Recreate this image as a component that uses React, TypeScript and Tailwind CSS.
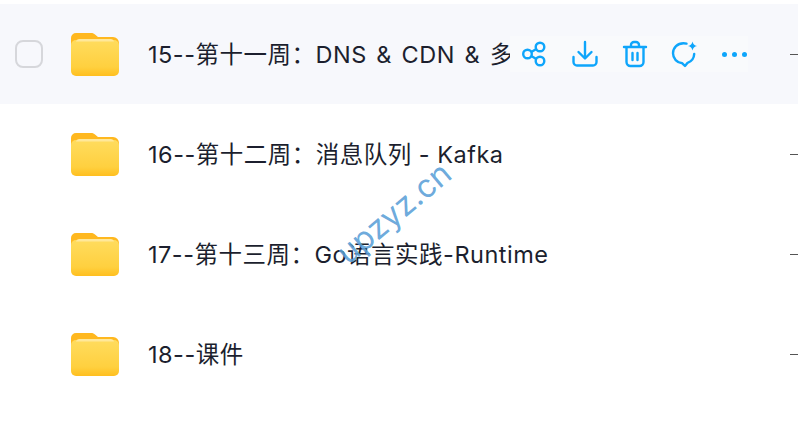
const rows = [
  { name: "15--第十一周：DNS & CDN & 多活", active: true },
  { name: "16--第十二周：消息队列 - Kafka", active: false },
  { name: "17--第十三周：Go语言实践-Runtime", active: false },
  { name: "18--课件", active: false },
];

function FolderIcon() {
  return (
    <svg width="48" height="44" viewBox="0 0 48 44" className="shrink-0">
      <defs>
        <linearGradient id="front" x1="0" y1="0" x2="0" y2="1">
          <stop offset="0" stopColor="#ffdc5e" />
          <stop offset="0.75" stopColor="#ffd03f" />
          <stop offset="1" stopColor="#ffbf1f" />
        </linearGradient>
      </defs>
      <path d="M0 6a5 5 0 0 1 5-5h15c2 0 3 .6 4.300 1.800L27 5h15a6 6 0 0 1 6 6v10H0z" fill="#ffb81f" />
      <path d="M0 13a5 5 0 0 1 5-5h38a5 5 0 0 1 5 5v26a5 5 0 0 1-5 5H5a5 5 0 0 1-5-5z" fill="url(#front)" />
      <path d="M5 9.500a3 3 0 0 1 3-2.500h32a3 3 0 0 1 3 2.500z" fill="#ffe89a" />
    </svg>
  );
}

function Actions() {
  return (
    <div className="flex h-9 w-[238px] shrink-0 items-center bg-[#f9fafc] text-[#0ea5fb]">
      <svg width="28" height="28" viewBox="0 0 28 28" fill="none" stroke="currentColor" strokeWidth="2.400" className="ml-2.5">
        <circle cx="7.500" cy="14" r="4.300" />
        <circle cx="20" cy="7" r="4.300" />
        <circle cx="20" cy="21" r="4.300" />
        <path d="M11.300 12l5-3M11.300 16l5 3" />
      </svg>
      <svg width="28" height="28" viewBox="0 0 28 28" fill="none" stroke="currentColor" strokeWidth="2.400" strokeLinecap="round" strokeLinejoin="round" className="ml-[23px]">
        <path d="M14 2v16M7.500 12l6.500 6.500L20.500 12" />
        <path d="M2.500 17v5a3.500 3.500 0 0 0 3.500 3.500h16a3.500 3.500 0 0 0 3.500-3.500v-5" />
      </svg>
      <svg width="26" height="28" viewBox="0 0 26 28" fill="none" stroke="currentColor" strokeWidth="2.400" strokeLinecap="round" strokeLinejoin="round" className="ml-[23px]">
        <path d="M2 7h22M9 6.500V5a3 3 0 0 1 3-3h2a3 3 0 0 1 3 3v1.500" />
        <path d="M4.500 7.500V22a4 4 0 0 0 4 4h9a4 4 0 0 0 4-4V7.500" />
        <path d="M10.500 13v7M15.500 13v7" />
      </svg>
      <svg width="28" height="28" viewBox="0 0 28 28" fill="none" className="ml-[23px]">
        <path d="M15.500 3.600C14.500 3.300 13.500 3.200 12.500 3.200 6.500 3.200 2 7.700 2 13.300c0 5.300 4 9.500 9.300 10l2.700 2.700 2.600-3.200c3.800-1.300 6.400-4.800 6.600-8.800" stroke="currentColor" strokeWidth="2.400" strokeLinecap="round" strokeLinejoin="round" />
        <path d="M21.500 1.500c.6 2.700 1.800 3.900 4.500 4.500-2.700.6-3.900 1.800-4.500 4.500-.6-2.700-1.800-3.900-4.500-4.500 2.700-.6 3.900-1.800 4.500-4.500z" fill="currentColor" />
      </svg>
      <div className="ml-[23px] flex gap-[5px]">
        <span className="h-[5px] w-[5px] rounded-full bg-current" />
        <span className="h-[5px] w-[5px] rounded-full bg-current" />
        <span className="h-[5px] w-[5px] rounded-full bg-current" />
      </div>
    </div>
  );
}

export default function App() {
  return (
    <div
      className="relative h-[430px] w-[798px] overflow-hidden bg-white pt-1 text-[#1c1f2e]"
      style={{ fontFamily: 'Inter, "Noto Sans CJK SC", sans-serif' }}
    >
      {rows.map((row) => (
        <div key={row.name} className={`flex h-[100px] items-center pl-[15px] ${row.active ? "bg-[#f7f8fc]" : "bg-white"}`}>
          <div className={`h-7 w-7 shrink-0 rounded-lg border-2 ${row.active ? "border-[#d6d7db]" : "border-transparent"}`} />
          <div className="ml-[28px]">
            <FolderIcon />
          </div>
          <div className="ml-[29px] flex min-w-0 flex-1 items-center">
            <div className={`min-w-0 flex-1 overflow-hidden whitespace-nowrap pt-0.5 text-[23.500px] leading-8 tracking-[0.500px] ${row.active ? "[word-spacing:2.500px]" : ""}`}>
              {row.name}
            </div>
            {row.active && <Actions />}
            <span className="ml-[42px] h-px w-2 shrink-0 bg-[#555]" />
          </div>
        </div>
      ))}
      <div className="absolute left-[394px] top-[213px] -translate-x-1/2 -translate-y-1/2 -rotate-[40deg] whitespace-nowrap text-[32px] leading-none text-[#5b9fd8]/90">
        upzyz.cn
      </div>
    </div>
  );
}
